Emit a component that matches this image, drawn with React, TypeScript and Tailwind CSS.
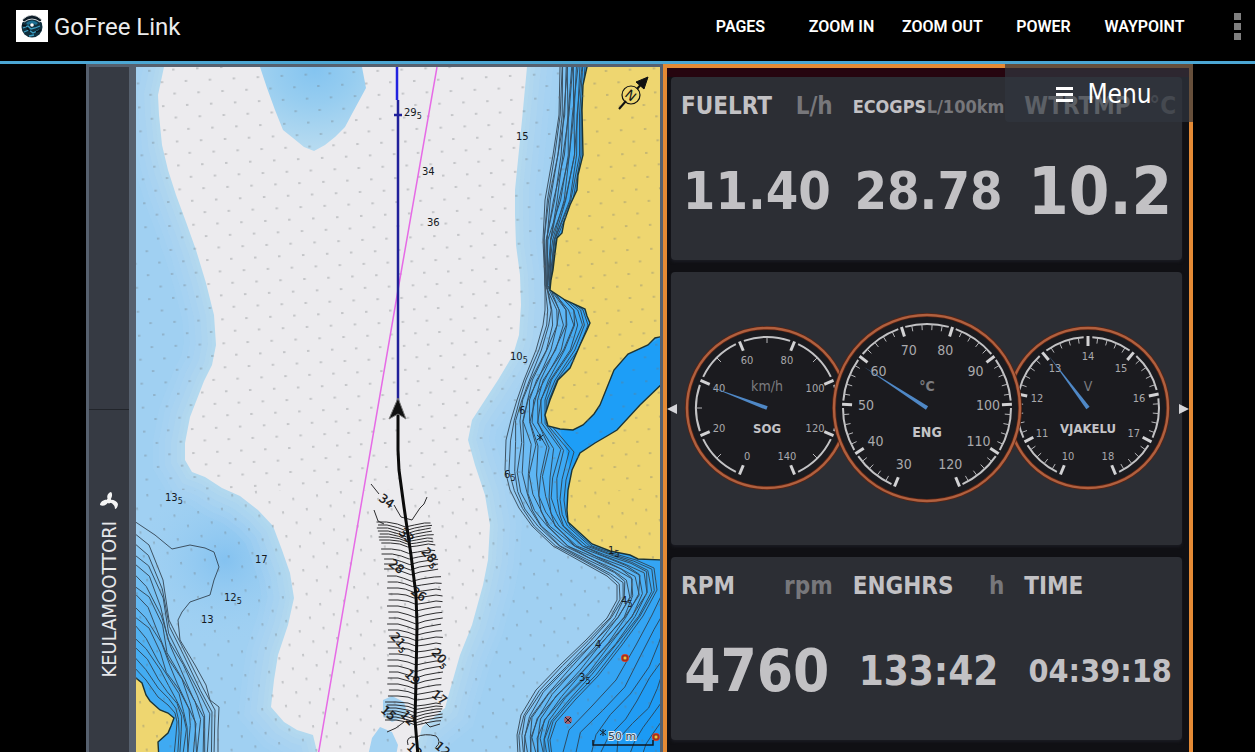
type Point = [number, number]

interface Reading {
  label: string
  unit?: string
  value: string
  labelClass?: string
  valueClass: string
}

interface GaugeProps {
  cx: number
  cy: number
  radius: number
  labels: number[]
  minor: number
  needle: Point
  unit: string
  name: string
  large?: boolean
}

const FONT = "font-['DejaVu_Sans_Condensed','DejaVu_Sans',sans-serif]"

const actions = ["Pages", "Zoom in", "Zoom out", "Power", "Waypoint"]

const engineReadings: Reading[] = [
  { label: "FUELRT", unit: "L/h", value: "11.40", valueClass: "text-[52px]" },
  { label: "ECOGPS", unit: "L/100km", value: "28.78", labelClass: "text-[18px]", valueClass: "text-[52px]" },
  { label: "WTRTMP", unit: "°C", value: "10.2", valueClass: "text-[65px]" },
]

const tripReadings: Reading[] = [
  { label: "RPM", unit: "rpm", value: "4760", valueClass: "text-[58px]" },
  { label: "ENGHRS", unit: "h", value: "133:42", valueClass: "text-[40px]" },
  { label: "TIME", value: "04:39:18", valueClass: "text-[32px]" },
]

// Deep water, drawn over the shallow blue
const deepWater =
  "M164 60 164 67 158 95 159 115 162 145 168 170 176 195 186 222 196 250 206 283 214 315 216 345 212 365 204 381 190 417 185 443 185 460 192 472 205 477 222 488 240 496 258 510 273 526 282 550 290 573 294 598 288 625 278 655 274 680 271 707 284 722 297 730 313 735 319 760 L414 760 422 727 445 708 450 690 460 655 472 625 483 585 488 560 490 525 485 495 475 465 468 440 472 420 485 400 498 380 513 355 519 335 521 305 520 275 516 245 515 215 515 190 518 160 522 120 527 67 527 60Z"
const shoal =
  "M260 60 260 67 267 88 275 110 283 130 293 138 304 147 314 151 325 145 335 137 345 127 353 112 366 88 362 67 362 60Z"
const northLand =
  "M587 60 587 67 583 85 582 110 583 155 578 175 577 190 570 205 564 222 562 233 557 238 555 253 553 270 551 280 550 290 565 300 585 309 587 316 590 323 587 330 580 345 570 368 558 380 550 400 545 415 548 426 560 429 573 430 583 425 594 414 600 405 606 390 614 370 628 354 648 345 655 338 664 336 664 60Z"
const eastLand =
  "M664 382 640 405 617 430 607 436 595 443 580 453 572 470 568 490 567 510 568 522 580 533 592 544 610 551 630 555 638 559 664 560Z"
const westLand =
  "M130 674 136 678 142 683 146 695 150 701 160 710 168 713 174 718 171 726 168 733 158 742 159 760 130 760Z"

const coastOuter: Point[] = [
  [560, 67], [559, 115], [553, 155], [545, 200], [543, 240], [545, 285], [545, 310], [543, 325], [536, 350],
  [524, 380], [517, 400], [511, 420], [506, 440], [505, 470], [510, 490], [519, 508], [532, 526], [553, 546],
  [580, 561], [607, 576], [617, 585], [617, 600], [607, 618], [586, 640], [560, 665], [536, 690], [521, 715],
  [517, 735], [518, 756],
]
const coastInner: Point[] = [
  [585, 67], [581, 115], [581, 155], [573, 200], [556, 240], [551, 285], [583, 310], [588, 325], [578, 350],
  [557, 380], [549, 400], [550, 424], [574, 452], [566, 480], [564, 500], [566, 515], [570, 526], [592, 546],
  [612, 553], [636, 560], [654, 568], [657, 590], [643, 616], [622, 645], [598, 676], [575, 700], [556, 722],
  [550, 740], [552, 756],
]
const flatsOuter: Point[] = [
  [664, 590], [652, 615], [636, 645], [616, 680], [592, 706], [569, 730], [562, 756],
]
const flatsInner: Point[] = [
  [676, 690], [672, 700], [668, 710], [661, 722], [654, 732], [646, 744], [642, 756],
]
const westOuter: Point[] = [
  [134, 533], [149, 545], [163, 580], [169, 620], [184, 650], [203, 688], [215, 710], [214, 756],
]
const westInner: Point[] = [
  [134, 667], [146, 680], [158, 697], [168, 705], [175, 713], [177, 722], [176, 735], [174, 756],
]
const westBay =
  "M134 521 155 535 172 549 190 545 205 548 214 552 219 567 214 580 210 595 190 602 182 612 178 620 180 640 195 665 206 685 210 700 219 707 218 730 218 756"

const track = "M398 414 398 450 399 470 404 507 411 555 416 595 417 625 416 680 415 720 418 756"

const soundings: { x: number; y: number; text: string; sub?: string }[] = [
  { x: 404, y: 116, text: "29", sub: "5" },
  { x: 516, y: 140, text: "15" },
  { x: 422, y: 175, text: "34" },
  { x: 427, y: 226, text: "36" },
  { x: 510, y: 360, text: "10", sub: "5" },
  { x: 519, y: 414, text: "6" },
  { x: 504, y: 478, text: "6", sub: "5" },
  { x: 165, y: 501, text: "13", sub: "5" },
  { x: 255, y: 563, text: "17" },
  { x: 224, y: 601, text: "12", sub: "5" },
  { x: 201, y: 623, text: "13" },
  { x: 608, y: 554, text: "1", sub: "5" },
  { x: 621, y: 604, text: "4", sub: "5" },
  { x: 595, y: 648, text: "4" },
  { x: 579, y: 681, text: "3", sub: "5" },
]

const trackDepths: { x: number; y: number; text: string; sub?: string; angle: number }[] = [
  { x: 378, y: 500, text: "34", angle: 35 },
  { x: 398, y: 533, text: "33", angle: 45 },
  { x: 421, y: 552, text: "28", sub: "5", angle: 50 },
  { x: 388, y: 565, text: "28", angle: 38 },
  { x: 410, y: 593, text: "26", angle: 35 },
  { x: 390, y: 637, text: "21", sub: "5", angle: 48 },
  { x: 431, y: 653, text: "20", sub: "5", angle: 48 },
  { x: 404, y: 675, text: "19", angle: 45 },
  { x: 431, y: 696, text: "17", angle: 38 },
  { x: 380, y: 711, text: "15", angle: 42 },
  { x: 400, y: 715, text: "12", angle: 48 },
  { x: 406, y: 748, text: "13", angle: 42 },
  { x: 434, y: 747, text: "12", angle: 42 },
]

function toPath(points: Point[]) {
  return "M" + points.map(([x, y]) => `${x.toFixed(1)} ${y.toFixed(1)}`).join("L")
}

function contours(outer: Point[], inner: Point[], count: number, wobble: number) {
  return Array.from({ length: count }, (_, i) => {
    const t = i / (count - 1)
    return toPath(
      outer.map(([x, y], k): Point => {
        const shift = Math.sin(i * 2.3 + k * 1.7) * wobble * Math.sin(t * Math.PI)
        return [x + (inner[k][0] - x) * t + shift, y + (inner[k][1] - y) * t]
      })
    )
  })
}

function surveyRows() {
  const rows: number[] = []
  for (let y = 523; y < 547; y += 3) rows.push(y)
  for (let y = 550; y < 574; y += 5) rows.push(y)
  for (let y = 577; y < 700; y += 6) rows.push(y)
  for (let y = 703; y < 724; y += 3) rows.push(y)
  return rows.map((y, i) => {
    const left = y < 585 ? 376 + (y - 520) * 0.18 : y > 700 ? 386 : 388
    const right = y < 585 ? 430 + (y - 520) * 0.18 : 442
    const mid = y < 600 ? 405 + (y - 520) * 0.12 : 416
    const bend = Math.sin(i * 0.7)
    const edge = Math.sin(i * 2)
    return `M${left + edge} ${y - 1} L${left + 10} ${y - 1} ${mid - 8} ${y + 1 + bend} ${mid} ${y + 4 + bend} ${mid + 9} ${y + 2} ${right - 6} ${y} ${right + edge} ${y - bend}`
  })
}

function polar(cx: number, cy: number, r: number, degrees: number): Point {
  const a = (degrees * Math.PI) / 180
  return [cx + r * Math.sin(a), cy - r * Math.cos(a)]
}

function Sounding({ x, y, text, sub }: { x: number; y: number; text: string; sub?: string }) {
  return (
    <text x={x} y={y}>
      {text}
      {sub && <tspan dy="3" fontSize="8">{sub}</tspan>}
    </text>
  )
}

function Buoy({ x, y }: { x: number; y: number }) {
  return (
    <g>
      <circle cx={x} cy={y} r="4" fill="#d8402a" />
      <rect x={x - 2} y={y - 2} width="4" height="4" fill="#f4c23c" stroke="#7a1d12" strokeWidth="1" />
    </g>
  )
}

function Chart() {
  const coast = contours(coastOuter, coastInner, 15, 2.2)
  const flats = contours(flatsOuter, flatsInner, 7, 3)
  const west = contours(westOuter, westInner, 14, 2.2)

  return (
    <svg
      viewBox="136 67 524 685"
      preserveAspectRatio="xMinYMin slice"
      className="block h-full w-full font-['DejaVu_Sans',sans-serif]"
      role="img"
      aria-label="Nautical chart"
    >
      <defs>
        <pattern id="dashes" width="24" height="24" patternUnits="userSpaceOnUse" patternTransform="translate(146 69) rotate(-3)">
          <path d="M2 2h2.5M14 14h2.5" stroke="#6f7378" strokeWidth="0.9" opacity="0.7" />
        </pattern>
        <pattern id="dashesSouth" width="24" height="24" patternUnits="userSpaceOnUse" patternTransform="translate(146 69) rotate(-8)">
          <path d="M2 1v2.5M14 13v2.5" stroke="#6f7378" strokeWidth="0.9" opacity="0.7" />
        </pattern>
        <radialGradient id="shoalFill" cx="0.52" cy="0.1" r="0.85">
          <stop offset="0" stopColor="#84c4f0" />
          <stop offset="0.45" stopColor="#97cdf0" />
          <stop offset="1" stopColor="#b5daf0" />
        </radialGradient>
        <radialGradient id="bayFill">
          <stop offset="0" stopColor="#84c2f0" />
          <stop offset="1" stopColor="#9fd0f2" stopOpacity="0" />
        </radialGradient>
      </defs>

      <rect x="130" y="60" width="534" height="700" fill="#a0d0f2" />
      <ellipse cx="225" cy="560" rx="90" ry="85" fill="url(#bayFill)" />
      <g fill="none" stroke="#bcddf0" opacity="0.9">
        <path d={deepWater} strokeWidth="64" opacity="0.15" />
        <path d={deepWater} strokeWidth="52" opacity="0.15" />
        <path d={deepWater} strokeWidth="40" opacity="0.2" />
        <path d={deepWater} strokeWidth="28" opacity="0.25" />
        <path d={deepWater} strokeWidth="16" opacity="0.3" />
        <path d={deepWater} strokeWidth="8" opacity="0.3" />
      </g>
      <path d={deepWater} fill="#ecebee" />
      <path d={shoal} fill="url(#shoalFill)" />
      <path d="M383 700 392 696 404 702 408 716 392 722 383 716Z M372 738 380 727 392 732 398 745 396 756 368 756Z" fill="#a3d2f2" />

      {coast.map((d, i) => (
        <path key={i} d={`${d}L670 756L670 60Z`} fill="#0f97fb" opacity="0.08" />
      ))}
      {flats.map((d, i) => (
        <path key={i} d={`${d}L670 756Z`} fill="#0f97fb" opacity="0.14" />
      ))}
      {west.map((d, i) => (
        <path key={i} d={`${d}L130 756L130 533Z`} fill="#0f97fb" opacity="0.07" />
      ))}
      <path d="M560 429 573 430 583 425 594 414 606 390 614 370 628 354 648 345 664 336 664 382 640 405 617 430 595 443 580 453 570 470 566 450Z" fill="#1d9ef7" />

      <g fill="none" stroke="#2e3d4a" strokeWidth="1" opacity="0.85">
        {[...coast, ...flats, ...west].map((d, i) => (
          <path key={i} d={d} />
        ))}
        <path d={westBay} />
      </g>

      <g fill="#eed670" stroke="#1b3436" strokeWidth="1.4">
        <path d={northLand} />
        <path d={eastLand} />
        <path d={westLand} />
      </g>

      <rect x="136" y="60" width="528" height="430" fill="url(#dashes)" />
      <rect x="136" y="490" width="528" height="270" fill="url(#dashesSouth)" />

      <path d="M437 67 398 290 318 756" fill="none" stroke="#e66be6" strokeWidth="1.5" />
      <path d="M397 67V100" stroke="#2222e0" strokeWidth="2.5" />
      <path d="M398 100V402M394 115H402" stroke="#20209a" strokeWidth="2.5" />

      <g fill="none" stroke="#2c2c2e" strokeWidth="1">
        {surveyRows().map((d, i) => (
          <path key={i} d={d} />
        ))}
        <path d="M371 484 379 494M394 505 401 517 412 520 420 508 424 504 427 497M374 510 378 521 384 524" />
        <path d="M387 732 396 728 404 722M425 722 430 727 440 724M408 745Q405 736 416 737 425 733 436 736 442 742 436 747" />
      </g>
      <path d={track} fill="none" stroke="#0b0b0b" strokeWidth="3" />
      <path d="M398 398 406 419 398 414 389 419Z" fill="#111" stroke="#777" strokeWidth="1" />

      <g fontSize="10" fill="#15191e">
        {soundings.map((s) => (
          <Sounding key={`${s.x}-${s.y}`} {...s} />
        ))}
      </g>
      <g fontSize="12" fill="#111" stroke="#111" strokeWidth="0.3">
        {trackDepths.map((s) => (
          <g key={`${s.x}-${s.y}`} transform={`rotate(${s.angle} ${s.x} ${s.y})`}>
            <Sounding x={s.x} y={s.y} text={s.text} sub={s.sub} />
          </g>
        ))}
      </g>

      <Buoy x={625} y={658} />
      <Buoy x={656} y={737} />
      <circle cx="568" cy="720" r="4" fill="#c0504d" opacity="0.8" />
      <path d="M565 717l6 6m0-6l-6 6M537 435l6 5m0-5l-6 5M540 434v7M600 730l6 5m0-5l-6 5M603 729v7" stroke="#16222c" strokeWidth="1" />

      {/* north arrow */}
      <g stroke="#111">
        <path d="M619 109 626 101M637 89 643 82" strokeWidth="2" />
        <path d="M648 77 644 89 636 82Z" fill="#111" strokeWidth="1" />
        <circle cx="631" cy="95" r="9" fill="none" strokeWidth="1.2" />
      </g>
      <text x="631" y="100" textAnchor="middle" fontSize="13" fill="#111" transform="rotate(40 631 95)">
        N
      </text>

      <path d="M593 740V745H653V740" fill="none" stroke="#10161c" strokeWidth="1.5" />
      <text x="622" y="740" textAnchor="middle" fontSize="11" fill="#33414c" stroke="#dbe9f3" strokeWidth="2" paintOrder="stroke">
        50 m
      </text>
    </svg>
  )
}

function Gauge({ cx, cy, radius, labels, minor, needle, unit, name, large }: GaugeProps) {
  const arc = radius - 9
  const step = 315 / (labels.length - 1)
  const textRadius = large ? 61 : 52
  const gap = large ? 2.5 : 3.5
  const dx = needle[0] - cx
  const dy = needle[1] - cy
  const len = Math.hypot(dx, dy)
  const nx = (-dy / len) * 2
  const ny = (dx / len) * 2

  return (
    <g>
      <circle cx={cx} cy={cy} r={radius} fill="#1b1b1f" stroke="#5b2413" strokeWidth="4" />
      <circle cx={cx} cy={cy} r={radius} fill="none" stroke="#b0603f" strokeWidth="2.4" />
      {labels.map((label, i) => {
        const angle = 202.5 + i * step
        const [x1, y1] = polar(cx, cy, arc + 1, angle)
        const [x2, y2] = polar(cx, cy, arc - 9, angle)
        const [tx, ty] = polar(cx, cy, textRadius, angle)
        const [ax, ay] = polar(cx, cy, arc, angle + gap)
        const [bx, by] = polar(cx, cy, arc, angle + step - gap)
        return (
          <g key={label}>
            <path d={`M${x1} ${y1}L${x2} ${y2}`} stroke="#d2d2d4" strokeWidth="3" />
            {i < labels.length - 1 && (
              <path d={`M${ax} ${ay}A${arc} ${arc} 0 0 1 ${bx} ${by}`} fill="none" stroke="#c3c3c5" strokeWidth="2" />
            )}
            {i < labels.length - 1 &&
              Array.from({ length: minor }, (_, m) => {
                const a = angle + (step * (m + 1)) / (minor + 1)
                const [mx, my] = polar(cx, cy, arc, a)
                const [ix, iy] = polar(cx, cy, arc - 6, a)
                return <path key={m} d={`M${mx} ${my}L${ix} ${iy}`} stroke="#b5b5b8" strokeWidth="1" />
              })}
            <text x={tx} y={ty + (large ? 5 : 4)} textAnchor="middle" fontSize={large ? 14 : 11} fill="#a9a9ac">
              {label}
            </text>
          </g>
        )
      })}
      <text x={cx} y={cy - 17} textAnchor="middle" fontSize="14" fill="#7b7b7f" fontWeight={large ? 700 : 400}>
        {unit}
      </text>
      <text x={cx} y={cy + (large ? 29 : 25)} textAnchor="middle" fontSize={large ? 14 : 13} fontWeight="700" fill="#c4c4c7">
        {name}
      </text>
      <path d={`M${needle[0]} ${needle[1]}L${cx + nx} ${cy + ny}L${cx - nx} ${cy - ny}Z`} fill="#4f88c6" />
    </g>
  )
}

function Gauges() {
  return (
    <svg viewBox="671 272 511 273" className={`block w-full ${FONT}`} role="img" aria-label="Speed, engine temperature and voltage">
      <Gauge cx={767} cy={408} radius={80} labels={[0, 20, 40, 60, 80, 100, 120, 140]} minor={1} needle={[711, 387]} unit="km/h" name="SOG" />
      <Gauge cx={1088} cy={408} radius={80} labels={[10, 11, 12, 13, 14, 15, 16, 17, 18]} minor={4} needle={[1049, 356]} unit="V" name="VJAKELU" />
      <Gauge cx={927} cy={408} radius={93} labels={[30, 40, 50, 60, 70, 80, 90, 100, 110, 120]} minor={4} needle={[864, 367]} unit="°C" name="ENG" large />
    </svg>
  )
}

function ReadingCard({ readings }: { readings: Reading[] }) {
  return (
    <dl className="grid h-[183px] grid-cols-3 gap-5 rounded bg-[#2c2e34] pl-[10px] pr-[6px] pt-[13px] font-bold text-[#c2c1c4] shadow-[0_2px_3px_#1a1b22]">
      {readings.map((reading) => (
        <div key={reading.label} className="flex min-w-0 flex-col">
          <dt className={`flex h-8 items-center justify-between whitespace-nowrap ${reading.labelClass ?? "text-[24px]"}`}>
            <span>{reading.label}</span>
            <span className="text-[#77777b]">{reading.unit}</span>
          </dt>
          <dd className={`flex flex-1 items-center justify-center whitespace-nowrap leading-none ${reading.valueClass}`}>
            {reading.value}
          </dd>
        </div>
      ))}
    </dl>
  )
}

function Header() {
  return (
    <header className="flex h-16 items-start border-b-[3px] border-[#4ba6d3] bg-black pl-4 font-[Roboto,sans-serif]">
      <div className="flex h-[52px] flex-1 items-center gap-[6px]">
        <svg viewBox="0 0 32 32" className="h-8 w-8 bg-white" aria-hidden="true">
          <circle cx="16" cy="17" r="10.5" fill="#10303f" />
          <path d="M6 10Q16 0 26 10L24 12Q16 6 8 12Z" fill="#0d1d28" stroke="#fff" strokeWidth="0.8" />
          <path d="M10 13Q16 8 22 13L20 15Q16 12 12 15Z" fill="#1b6f92" />
          <circle cx="16" cy="15" r="1.8" fill="#fff" />
          <path d="M7 18l5-2 3 3 4-1 5-2M8 22l5-2 4 3 6-3M13 26l5-1" fill="none" stroke="#3d9fc4" strokeWidth="1.3" />
          <path d="M6 15l4 1M20 22l5-2M11 18l3 3" stroke="#07131b" strokeWidth="1.6" />
        </svg>
        <h1 className="whitespace-nowrap pt-[2px] text-[24px] text-[#ececec]">GoFree Link</h1>
      </div>
      <nav className="flex h-[53px]">
        {actions.map((action) => (
          <button key={action} type="button" className="min-w-[101px] whitespace-nowrap text-base font-semibold uppercase text-white">
            {action}
          </button>
        ))}
        <button type="button" aria-label="More options" className="ml-7 mr-1 flex w-7 flex-col items-center justify-center gap-[3px]">
          <span className="h-[7px] w-[7px] bg-[#808080]" />
          <span className="h-[7px] w-[7px] bg-[#808080]" />
          <span className="h-[7px] w-[7px] bg-[#808080]" />
        </button>
      </nav>
    </header>
  )
}

function SideBar() {
  return (
    <aside className="flex w-10 flex-col bg-[#363a43]">
      <div className="h-1/2 border-b border-[#22252b]" />
      <div className="flex h-1/2 flex-col items-center justify-center gap-[10px] pt-2">
        <svg viewBox="0 0 20 20" className="h-5 w-5" aria-hidden="true">
          <path
            d="M10 10C7 7 8 2 12 1c2 2 1 6-1 8zM10 10c-2 4-6 6-9 4 0-3 4-6 8-5zM10 9c4-1 8 1 9 4 0 3-2 5-3 5 0-4-3-6-6-7z"
            fill="#f4f4f4"
          />
          <circle cx="10" cy="10" r="2.4" fill="#f4f4f4" />
        </svg>
        <span className="rotate-180 whitespace-nowrap text-[20px] leading-6 text-[#e6e7ea] [writing-mode:vertical-rl]">KEULAMOOTTORI</span>
      </div>
    </aside>
  )
}

export default function App() {
  return (
    <div className="flex min-h-screen flex-col overflow-hidden bg-black">
      <Header />
      <main className={`grid flex-1 grid-cols-[577fr_530fr] pl-[86px] pr-[62px] ${FONT}`}>
        <section className="flex min-w-0 gap-[7px] bg-[#56606e] pl-[3px] pr-[3px] pt-[3px]">
          <SideBar />
          <div className="min-w-0 flex-1">
            <Chart />
          </div>
        </section>

        <section className="relative min-w-0 border-x-4 border-t-4 border-[#e48a35] bg-[#101014] pl-1 pr-[7px]">
          <div className="-ml-1 -mr-[7px] h-[9px] bg-[#26050f]" />
          <div className="flex flex-col gap-3">
            <ReadingCard readings={engineReadings} />
            <div className="rounded bg-[#2c2e34] shadow-[0_2px_3px_#1a1b22]">
              <Gauges />
            </div>
            <ReadingCard readings={tripReadings} />
          </div>

          <button type="button" aria-label="Previous" className="absolute left-0 top-[336px]">
            <svg viewBox="0 0 10 10" className="h-[10px] w-[10px]">
              <path d="M0 5 10 0V10Z" fill="#d4d4d8" />
            </svg>
          </button>
          <button type="button" aria-label="Next" className="absolute right-0 top-[336px]">
            <svg viewBox="0 0 10 10" className="h-[10px] w-[10px]">
              <path d="M10 5 0 0V10Z" fill="#d4d4d8" />
            </svg>
          </button>

          <button
            type="button"
            className="absolute -right-1 -top-1 flex h-[58px] w-[188px] items-center justify-center gap-[14px] rounded-bl bg-[#30363e]/70 pl-[10px] pt-[3px] text-[26px] text-white"
          >
            <span className="flex flex-col gap-[3px]">
              <span className="h-[3px] w-[17px] bg-white" />
              <span className="h-[3px] w-[17px] bg-white" />
              <span className="h-[3px] w-[17px] bg-white" />
            </span>
            Menu
          </button>
        </section>
      </main>
    </div>
  )
}
